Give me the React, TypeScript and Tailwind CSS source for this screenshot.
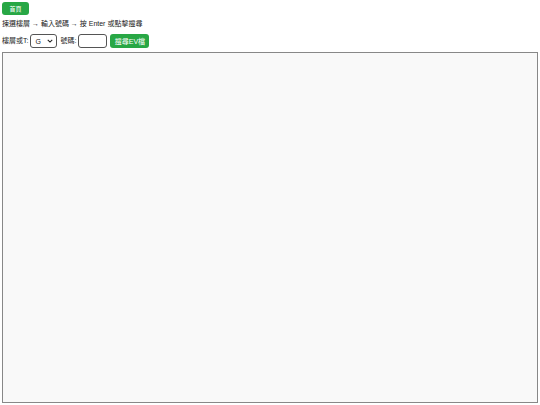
export default function App() {
  return (
    <div className="w-[540px] h-[405px] bg-white p-[2px] text-[7px] text-black" style={{ fontFamily: '"Liberation Sans", "Noto Sans CJK TC", sans-serif' }}>
      <button type="button" className="h-[13px] w-[27px] rounded-[3px] bg-[#28a745] text-[6px] leading-none text-white">
        首頁
      </button>
      <p className="mt-[4px] h-[9px] leading-[9px] text-[#222]">揀選樓層 → 輸入號碼 → 按 Enter 或點擊搜尋</p>
      <div className="mt-[6px] flex h-[14px] items-center gap-[2px] text-[#222]">
        <span>樓層或T:</span>
        <div className="relative h-[14px] w-[27px]">
          <select className="h-[14px] w-[27px] appearance-none rounded-[3px] border border-[#555] bg-white pl-[4px] text-[7px] leading-none" defaultValue="G">
            <option>G</option>
          </select>
          <svg viewBox="0 0 8 5" className="pointer-events-none absolute right-[4px] top-[5px] h-[4px] w-[6px]" aria-hidden>
            <path d="M1 1 L4 4 L7 1" fill="none" stroke="#222" strokeWidth="1.4" />
          </svg>
        </div>
        <span className="ml-[1px]">號碼:</span>
        <input className="h-[14px] w-[29px] rounded-[3px] border border-[#555] bg-white" />
        <button type="button" className="ml-[1px] h-[14px] w-[39px] rounded-[3px] bg-[#28a745] text-[7px] leading-none text-white">
          搜尋EV檔
        </button>
      </div>
      <div className="mt-[4px] h-[351px] w-[536px] border border-[#888] bg-[#f9f9f9]" />
    </div>
  );
}
